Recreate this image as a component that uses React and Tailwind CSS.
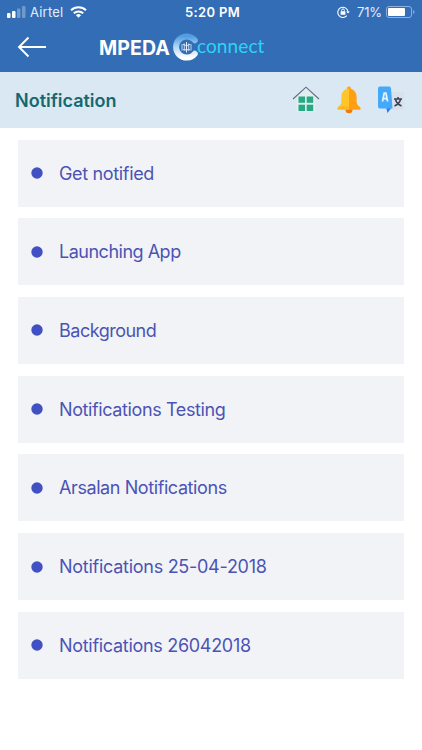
const notifications = [
  { text: 'Get notified', tracking: 'tracking-[-0.34px]' },
  { text: 'Launching App', tracking: 'tracking-[-0.49px]' },
  { text: 'Background', tracking: 'tracking-[-0.5px]' },
  { text: 'Notifications Testing', tracking: 'tracking-[-0.39px]' },
  { text: 'Arsalan Notifications', tracking: 'tracking-[-0.41px]' },
  { text: 'Notifications 25-04-2018', tracking: 'tracking-[-0.27px]' },
  { text: 'Notifications 26042018', tracking: 'tracking-[-0.3px]' },
];

function StatusBar() {
  return (
    <div className="grid h-6 grid-cols-3 items-center pl-[7px] pr-[7px] text-[13px] leading-none text-[#e4edfa]">
      <div className="flex items-center">
        <svg width="19" height="12" viewBox="0 0 19 12" fill="#fff">
          <rect x="0" y="7" width="3.5" height="5" rx="1" />
          <rect x="5" y="5" width="3.5" height="7" rx="1" />
          <rect x="10" y="2.5" width="3.5" height="9.5" rx="1" opacity=".3" />
          <rect x="15" y="0" width="3.5" height="12" rx="1" opacity=".3" />
        </svg>
        <span className="ml-1 tracking-[0.2px]">Airtel</span>
        <svg className="ml-[7px]" width="17" height="12" viewBox="0 0 17 12" fill="none" stroke="#fff" strokeWidth="2">
          <path d="M1 4.3a11 11 0 0 1 15 0" />
          <path d="M3.8 7.2a7 7 0 0 1 9.4 0" />
          <path d="M8.5 11.8 5.9 9.2a3.8 3.8 0 0 1 5.2 0z" fill="#fff" stroke="none" />
        </svg>
      </div>
      <div className="whitespace-nowrap pl-[3px] text-center font-semibold tracking-[0.35px] text-white">5:20 PM</div>
      <div className="flex items-center justify-end">
        <svg width="13" height="12" viewBox="0 0 13 12" fill="none" stroke="#fff" strokeWidth="1.1">
          <path d="M9.8 9.7A5.1 5.1 0 1 1 11 6" />
          <path d="m9.2 5.6 1.8 2 1.8-2z" fill="#fff" stroke="none" />
          <rect x="3.6" y="5.3" width="4.8" height="3.5" rx=".4" fill="#fff" stroke="none" />
          <path d="M4.7 5.5V4.2a1.3 1.3 0 0 1 2.6 0v1.3" strokeWidth=".9" />
        </svg>
        <span className="ml-[7px] tracking-[-0.1px]">71%</span>
        <svg className="ml-1 shrink-0" width="29" height="12" viewBox="0 0 29 12">
          <rect x=".5" y=".5" width="25" height="11" rx="2.5" fill="none" stroke="#8eafe0" />
          <rect x="2" y="2" width="17" height="8" rx="1" fill="#fff" />
          <path d="M27.2 4v4a2.2 2.2 0 0 0 0-4" fill="#8eafe0" />
        </svg>
      </div>
    </div>
  );
}

function ConnectMark() {
  return (
    <svg className="ml-[3px] shrink-0" width="27" height="28" viewBox="0 0 27 28" fill="none">
      <defs>
        <linearGradient id="ring" x1="0" y1="0" x2="0" y2="1">
          <stop offset="0" stopColor="#529ddf" />
          <stop offset=".45" stopColor="#a9d1f2" />
          <stop offset="1" stopColor="#fff" />
        </linearGradient>
      </defs>
      <path d="M21.8 7.2A10.6 10.6 0 1 0 21.8 20.8" stroke="url(#ring)" strokeWidth="6" strokeLinecap="round" />
      <g stroke="#e3f1ff" strokeWidth="1">
        <path d="M13.5 9v10.5M10 11.5c2 0 3.5 1 3.5 2.4 0-1.4 1.5-2.4 3.5-2.4M10 16.8h7" />
        <path d="M9 11v6.5M18 11v6.5M11.3 10.5v7M15.7 10.5v7" strokeWidth=".8" />
      </g>
    </svg>
  );
}

function HomeIcon() {
  return (
    <svg width="28" height="28" viewBox="0 0 28 28">
      <path d="M4.5 11 14 3l9.5 8v15H4.500z" fill="#e2edf0" />
      <path d="M1 13 14 1.2 27 13" fill="none" stroke="#626e7f" strokeWidth="1.1" />
      <g fill="#27a984">
        <rect x="6.5" y="10.500" width="6.500" height="6.300" />
        <rect x="14.700" y="10.500" width="6.500" height="6.300" />
        <rect x="6.500" y="18.700" width="6.500" height="6.300" />
        <rect x="14.700" y="18.700" width="6.500" height="6.300" />
      </g>
    </svg>
  );
}

function BellIcon() {
  return (
    <svg width="24" height="28" viewBox="0 0 24 28">
      <circle cx="12" cy="23.800" r="3.500" fill="#f2790b" />
      <path d="M9.800 4V2.800a2.200 2.200 0 0 1 4.400 0V4" fill="#ffa51a" />
      <path d="M12 2.800c-4.500 0-7.600 3.500-7.600 8v4.700c0 2-.8 3.200-2 4.500l-1.400 1.500h11z" fill="#ffc52a" />
      <path d="M12 2.800c4.500 0 7.600 3.500 7.600 8v4.700c0 2 .8 3.200 2 4.500l1.400 1.500H12z" fill="#ff9f12" />
      <path d="M1.800 20.500H12v3.300H1.800c-1.800 0-2-2.300 0-3.300z" fill="#ffb81c" />
      <path d="M22.200 20.500H12v3.300h10.200c1.800 0 2-2.300 0-3.300z" fill="#ffa014" />
    </svg>
  );
}

function TranslateIcon() {
  return (
    <svg width="28" height="28" viewBox="0 0 28 28">
      <rect x="12" y="6" width="15" height="18" rx="2" fill="#d9e0ee" />
      <path d="M9 21h6l-4.500 6z" fill="#3478ee" />
      <path d="M3 .5h9a2 2 0 0 1 2 1.900L15.500 22.500H3a2 2 0 0 1-2-2v-18a2 2 0 0 1 2-2z" fill="#43aafa" />
      <path d="m5.500 15.500 1.700-8.500h1.700l1.700 8.500M6.300 12.600h4" fill="none" stroke="#e6f5ff" strokeWidth="1.700" />
      <path d="M17 13h8M21 11v2M18.500 13.500c.8 3 3 5.200 6 6.500M23.500 13.500c-.8 3-3 5.200-6 6.500" fill="none" stroke="#3c4353" strokeWidth="1.600" />
    </svg>
  );
}

export default function App() {
  return (
    <div className="flex h-[750px] w-[422px] flex-col overflow-hidden bg-white font-['Inter','Liberation_Sans',sans-serif]">
      <header className="h-[72px] shrink-0 bg-[#336db6]">
        <StatusBar />
        <div className="flex h-[46px] items-center pl-[17px]">
          <button aria-label="Back" className="shrink-0">
            <svg width="30" height="22" viewBox="0 0 30 22" fill="none" stroke="#fff" strokeWidth="1.9">
              <path d="M29 11H2M11.5 1.5 2 11l9.5 9.5" />
            </svg>
          </button>
          <div className="ml-[52px] flex items-center">
            <span className="whitespace-nowrap pt-[3px] text-[19.5px] font-bold leading-none tracking-[0.1px] text-white">MPEDA</span>
            <ConnectMark />
            <span className="-ml-[3px] -mt-[4px] whitespace-nowrap font-[Lato,'Liberation_Sans',sans-serif] text-[19px] leading-none tracking-[0.1px] text-[#2bd4f4]">connect</span>
          </div>
        </div>
      </header>
      <div className="flex h-14 shrink-0 items-center justify-between bg-[#d9e8f3] pl-[15px] pr-[17px]">
        <h1 className="pt-px text-[18px] font-semibold leading-none text-[#15686f]">Notification</h1>
        <div className="flex items-center">
          <HomeIcon />
          <span className="ml-[17px]"><BellIcon /></span>
          <span className="ml-4"><TranslateIcon /></span>
        </div>
      </div>
      <ul className="flex flex-col gap-[11.7px] px-[18px] pt-[11.6px]">
        {notifications.map(({ text, tracking }) => (
          <li key={text} className="flex h-[67px] shrink-0 items-center bg-[#f2f3f6] pl-[13px]">
            <svg className="shrink-0" width="12" height="12" viewBox="0 0 12 12" fill="#4150c2">
              <circle cx="6" cy="6" r="5.7" />
            </svg>
            <span className={`ml-4 whitespace-nowrap pt-[1px] text-[18px] leading-none text-[#4b53b5] ${tracking}`}>{text}</span>
          </li>
        ))}
      </ul>
    </div>
  );
}
